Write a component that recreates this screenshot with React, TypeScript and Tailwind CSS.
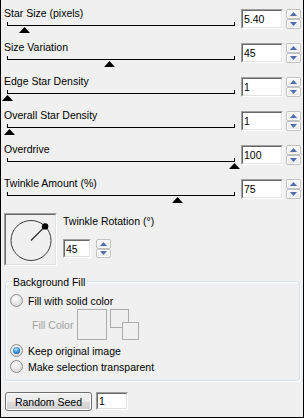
import React from "react";

function Arrow({ up }: { up: boolean }) {
  return (
    <svg width="7" height="4" viewBox="0 0 7 4">
      {up ? (
        <polygon points="3.5,0 7,4 0,4" fill="#4d6fae" />
      ) : (
        <polygon points="0,0 7,0 3.5,4" fill="#4d6fae" />
      )}
    </svg>
  );
}

function Spinner({ cls }: { cls: string }) {
  const btn =
    "flex-1 flex items-center justify-center border border-[#c2c2c2] rounded-[2px] bg-gradient-to-b from-[#fbfbfb] to-[#e7e7e7] shadow-[inset_0_0_0_1px_#ffffff]";
  return (
    <div className={"flex flex-col w-[15px] " + cls}>
      <div className={btn}>
        <Arrow up />
      </div>
      <div className={btn}>
        <Arrow up={false} />
      </div>
    </div>
  );
}

function Field({ value, cls }: { value: string; cls: string }) {
  return (
    <div
      className={
        "border border-[#a0a0a0] border-b-[#ffffff] border-r-[#ffffff] " + cls
      }
    >
      <div className="h-full w-full border border-[#696969] border-b-[#e3e3e3] border-r-[#e3e3e3] bg-white pl-[1px] flex items-center leading-[12px]">
        {value}
      </div>
    </div>
  );
}

function SliderRow({
  label,
  value,
  frac,
}: {
  label: string;
  value: string;
  frac: number;
}) {
  return (
    <div className="flex h-[34px]">
      <div className="flex-1 pl-[3px]">
        <div className="h-[12px] leading-[12px] whitespace-nowrap">{label}</div>
        <div className="relative ml-[3px] mt-[3px] h-[4px] w-[228px] border-l border-r border-b border-black">
          <svg
            className="absolute top-[5px]"
            style={{ left: frac * 227 - 1 - 5.5 }}
            width="11"
            height="6"
            viewBox="0 0 11 6"
          >
            <polygon points="5.5,0 11,6 0,6" fill="#000" />
          </svg>
        </div>
      </div>
      <div className="mt-[2px] flex gap-[3px] pr-[2px]">
        <Field value={value} cls="w-[42px] h-[20px]" />
        <Spinner cls="h-[20px]" />
      </div>
    </div>
  );
}

function Radio({ checked, label }: { checked?: boolean; label: string }) {
  return (
    <div className="flex items-center h-[13px] pl-[4px]">
      <span className="w-[13px] h-[13px] rounded-full border border-[#8e8f8f] bg-[radial-gradient(circle_at_40%_35%,#ffffff,#dcdcdc_70%,#c8c8c8)] flex items-center justify-center">
        {checked && (
          <span className="w-[7px] h-[7px] rounded-full bg-[radial-gradient(circle_at_45%_35%,#a9e3fb,#2e86cf_55%,#17508f)]" />
        )}
      </span>
      <span className="ml-[5px] leading-[12px] whitespace-nowrap">{label}</span>
    </div>
  );
}

export default function App() {
  return (
    <div className="w-[304px] h-[418px] bg-[#f0f0f0] border-l border-r border-b border-black pt-[7px] text-[10.5px] text-black font-['Liberation_Sans',Arial,sans-serif] overflow-hidden">
      <SliderRow label="Star Size (pixels)" value="5.40" frac={0.075} />
      <SliderRow label="Size Variation" value="45" frac={0.45} />
      <SliderRow label="Edge Star Density" value="1" frac={0.0} />
      <SliderRow label="Overall Star Density" value="1" frac={0.012} />
      <SliderRow label="Overdrive" value="100" frac={1} />
      <SliderRow label="Twinkle Amount (%)" value="75" frac={0.75} />

      <div className="flex pl-[3px] mt-[2px]">
        <div className="w-[53px] h-[53px] border border-[#a0a0a0] border-b-[#ffffff] border-r-[#ffffff]">
          <div className="w-full h-full border border-[#696969] border-b-[#e3e3e3] border-r-[#e3e3e3]">
            <svg width="49" height="49" viewBox="0 0 49 49" className="block">
              <circle cx="25" cy="25.5" r="20" fill="none" stroke="#3c3c3c" strokeWidth="1" />
              <line x1="25" y1="25.5" x2="39.1" y2="11.4" stroke="#222" strokeWidth="1.2" />
              <circle cx="39.1" cy="11.4" r="3.2" fill="#000" />
            </svg>
          </div>
        </div>
        <div className="ml-[6px] mt-[2px] flex flex-col">
          <div className="h-[12px] leading-[12px] whitespace-nowrap">Twinkle Rotation (°)</div>
          <div className="mt-[12px] flex gap-[5px]">
            <Field value="45" cls="w-[28px] h-[19px]" />
            <Spinner cls="h-[19px]" />
          </div>
        </div>
      </div>

      <div className="ml-[4px] mt-[15px] w-[295px] h-[100px] border border-[#d5dfe5] rounded-[3px] shadow-[inset_1px_1px_0_#ffffff,1px_1px_0_#ffffff]">
        <div className="-mt-[6px] ml-[6px] px-[1px] w-fit bg-[#f0f0f0] h-[12px] leading-[12px]">
          Background Fill
        </div>
        <div className="mt-[6px]">
          <Radio label="Fill with solid color" />
        </div>
        <div className="mt-[2px] flex items-center">
          <span className="ml-[26px] text-[#a0a0a0] leading-[12px]">Fill Color</span>
          <div className="ml-[4px] w-[30px] h-[31px] border border-[#acacac]" />
          <svg width="29" height="31" viewBox="0 0 29 31" className="ml-[3px] block">
            <rect x="0.5" y="0.5" width="18" height="18" fill="none" stroke="#acacac" />
            <rect x="12.5" y="13.5" width="16" height="17" fill="#f0f0f0" stroke="#acacac" />
          </svg>
        </div>
        <div className="mt-[4px]">
          <Radio checked label="Keep original image" />
        </div>
        <div className="mt-[3px]">
          <Radio label="Make selection transparent" />
        </div>
      </div>

      <div className="flex ml-[4px] mt-[11px] gap-[4px]">
        <div className="w-[87px] h-[19px] border border-[#707070] rounded-[3px] bg-[linear-gradient(#f2f2f2_0%,#ebebeb_50%,#dddddd_50%,#cfcfcf_100%)] shadow-[inset_0_0_0_1px_#fcfcfc] flex items-center justify-center leading-[12px]">
          Random Seed
        </div>
        <Field value="1" cls="w-[32px] h-[18px]" />
      </div>
    </div>
  );
}
